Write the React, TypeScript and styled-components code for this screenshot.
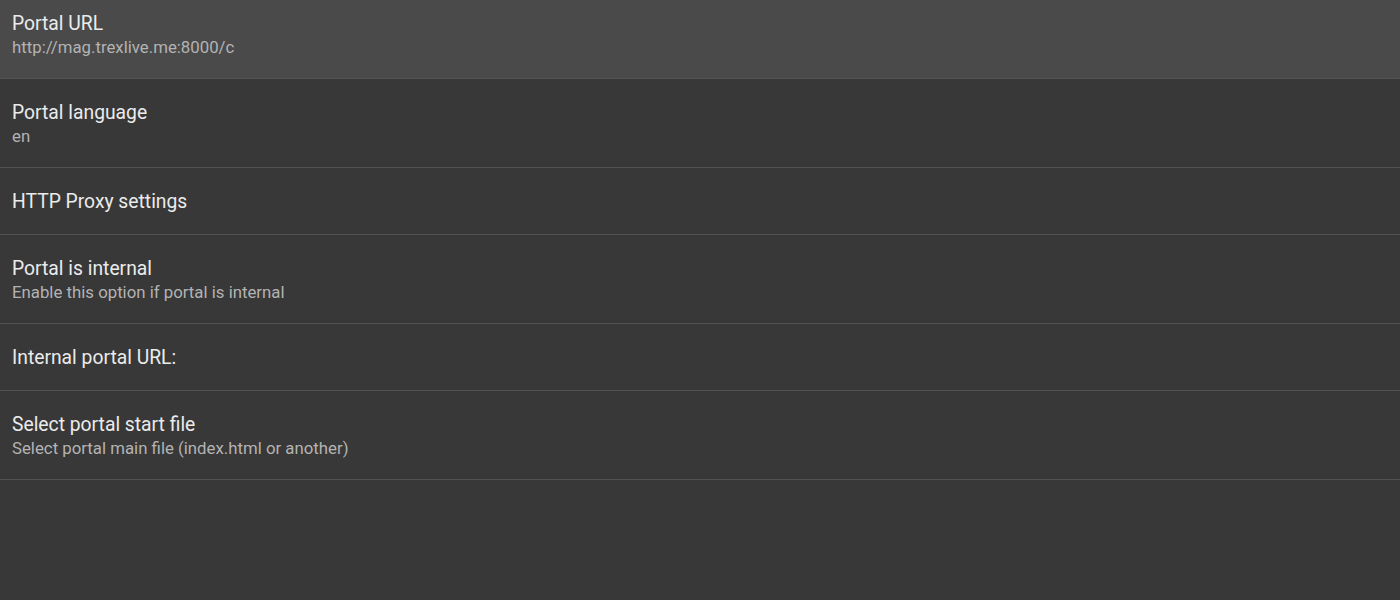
import React from "react";
import styled, { createGlobalStyle } from "styled-components";

const Global = createGlobalStyle`
  html, body {
    margin: 0;
    padding: 0;
    background: #383838;
    overflow: hidden;
  }
  body {
    font-family: Roboto, "Noto Sans", sans-serif;
  }
`;

const Screen = styled.div`
  width: 1400px;
  height: 600px;
  background: #383838;
  overflow: hidden;
`;

const List = styled.ul`
  list-style: none;
  margin: -10px 0 0;
  padding: 0;
`;

const Row = styled.li<{ $tall: boolean; $focused?: boolean }>`
  box-sizing: border-box;
  height: ${(p) => (p.$tall ? 89 : 67)}px;
  padding: 23px 12px 0;
  background: ${(p) => (p.$focused ? "#4a4a4a" : "#383838")};
  border-bottom: 1px solid #525252;
  display: flex;
  flex-direction: column;
`;

const Title = styled.div`
  font-size: 19.3px;
  line-height: 22px;
  color: #ebebeb;
  white-space: nowrap;
`;

const Summary = styled.div`
  font-size: 16.8px;
  line-height: 24px;
  color: #b3b3b3;
  white-space: nowrap;
`;

type Pref = { title: string; summary?: string };

const prefs: Pref[] = [
  { title: "Portal URL", summary: "http://mag.trexlive.me:8000/c" },
  { title: "Portal language", summary: "en" },
  { title: "HTTP Proxy settings" },
  { title: "Portal is internal", summary: "Enable this option if portal is internal" },
  { title: "Internal portal URL:" },
  { title: "Select portal start file", summary: "Select portal main file (index.html or another)" },
];

export default function App() {
  return (
    <Screen>
      <Global />
      <List>
        {prefs.map((p, i) => (
          <Row key={p.title} $tall={!!p.summary} $focused={i === 0}>
            <Title>{p.title}</Title>
            {p.summary && <Summary>{p.summary}</Summary>}
          </Row>
        ))}
      </List>
    </Screen>
  );
}
